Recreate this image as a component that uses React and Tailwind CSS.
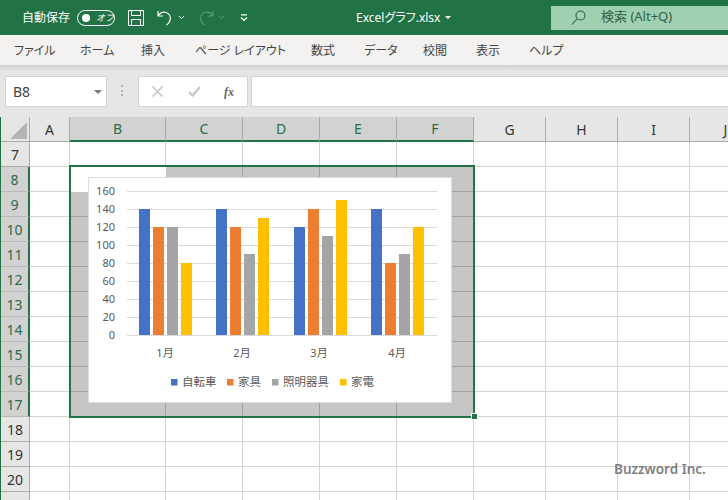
import React from "react";

const font = { fontFamily: '"Noto Sans", "Noto Sans CJK JP", sans-serif' };

const menus = [
  { name: "ファイル", w: "w-[66px]" },
  { name: "ホーム", w: "w-[61px]" },
  { name: "挿入", w: "w-[54px]" },
  { name: "ページ レイアウト", w: "w-[116px]" },
  { name: "数式", w: "w-[53px]" },
  { name: "データ", w: "w-[59px]" },
  { name: "校閲", w: "w-[53px]" },
  { name: "表示", w: "w-[53px]" },
  { name: "ヘルプ", w: "w-[60px]" },
];

const columns = [
  { name: "A", w: "w-[40px]" },
  { name: "B", w: "w-[96px]", on: true },
  { name: "C", w: "w-[77px]", on: true },
  { name: "D", w: "w-[77px]", on: true },
  { name: "E", w: "w-[77px]", on: true },
  { name: "F", w: "w-[77px]", on: true },
  { name: "G", w: "w-[72px]" },
  { name: "H", w: "w-[72px]" },
  { name: "I", w: "w-[72px]" },
  { name: "J", w: "w-[72px]" },
];

const rows = [7, 8, 9, 10, 11, 12, 13, 14, 15, 16, 17, 18, 19, 20, 21];

const colors = ["#4472c4", "#ed7d31", "#a5a5a5", "#ffc000"];

const groups = [
  { label: "1月", center: 165, x: [139, 153, 167, 181], v: [140, 120, 120, 80] },
  { label: "2月", center: 242, x: [216, 230, 244, 258], v: [140, 120, 90, 130] },
  { label: "3月", center: 319, x: [294, 308, 322, 336], v: [120, 140, 110, 150] },
  { label: "4月", center: 397, x: [371, 385, 399, 413], v: [140, 80, 90, 120] },
];

const legend = [
  { name: "自転車", x: 171 },
  { name: "家具", x: 227 },
  { name: "照明器具", x: 272 },
  { name: "家電", x: 340 },
];

function Chart() {
  return (
    <svg width="364" height="226" viewBox="88 177 364 226" className="block">
      {[0, 20, 40, 60, 80, 100, 120, 140, 160].map((t) => {
        const y = 335 - t * 0.9;
        return (
          <g key={t}>
            <line x1="127" x2="437" y1={y + 0.5} y2={y + 0.5} stroke="#d9d9d9" />
            <text x="115" y={y + 4} textAnchor="end" fontSize="11" fill="#595959">{t}</text>
          </g>
        );
      })}
      {groups.map((g) => (
        <g key={g.label}>
          {g.v.map((v, i) => (
            <rect key={i} x={g.x[i]} y={335 - v * 0.9} width="11" height={v * 0.9} fill={colors[i]} />
          ))}
          <text x={g.center} y="357" textAnchor="middle" fontSize="11" fill="#595959">{g.label}</text>
        </g>
      ))}
      {legend.map((l, i) => (
        <g key={l.name}>
          <rect x={l.x} y="379" width="6.5" height="6.5" fill={colors[i]} />
          <text x={l.x + 11} y="386" fontSize="11.5" fill="#595959">{l.name}</text>
        </g>
      ))}
    </svg>
  );
}

function TitleBar() {
  return (
    <div className="flex h-[35px] shrink-0 items-center bg-[#217346] text-white">
      <span className="ml-[22px] w-[55px] whitespace-nowrap text-[12px] [font-feature-settings:'palt']">自動保存</span>
      <div className="flex h-[16px] w-[38px] items-center rounded-full border border-white pl-[4px]">
        <div className="h-[8px] w-[8px] rounded-full bg-white" />
        <span className="ml-[6px] text-[9px] italic leading-none">オフ</span>
      </div>
      <svg className="ml-[13px]" width="16" height="16" viewBox="0 0 16 16" fill="none" stroke="#fff" strokeWidth="1">
        <path d="M.5.5h15v15H.5z" />
        <path d="M3.500.5v5h9v-5M3.500 15.500v-6h9v6" />
      </svg>
      <svg className="ml-[13px]" width="16" height="16" viewBox="0 0 16 16" fill="none" stroke="#fff" strokeWidth="1.2">
        <path d="M1 1v5h5M1 6c2-3 5-4.500 8-3.500 3.500 1.200 5 4.500 4 8-.5 1.700-2 3.500-3.500 4.500" />
      </svg>
      <svg className="ml-[5px]" width="7" height="5" viewBox="0 0 7 5" fill="none" stroke="#fff" strokeWidth="1">
        <path d="M1 1l2.500 2.500L6 1" />
      </svg>
      <svg className="ml-[13px]" width="16" height="16" viewBox="0 0 16 16" fill="none" stroke="#5b9a78" strokeWidth="1.2">
        <path d="M15 1v5h-5M15 6c-2-3-5-4.500-8-3.500-3.500 1.200-5 4.500-4 8 .5 1.700 2 3.500 3.500 4.500" />
      </svg>
      <svg className="ml-[4px]" width="7" height="5" viewBox="0 0 7 5" fill="none" stroke="#5b9a78" strokeWidth="1">
        <path d="M1 1l2.500 2.500L6 1" />
      </svg>
      <svg className="ml-[15px]" width="8" height="8" viewBox="0 0 8 8" fill="none" stroke="#fff" strokeWidth="1.200">
        <path d="M1 .8h6M1 3.500l3 3 3-3" />
      </svg>
      <span className="ml-[108px] w-[89px] whitespace-nowrap text-[12px] [font-feature-settings:'palt']">Excelグラフ.xlsx</span>
      <svg width="6" height="3" viewBox="0 0 6 3" fill="#fff">
        <path d="M0 0h6L3 3z" />
      </svg>
      <div className="ml-[100px] flex h-[24px] flex-1 items-center bg-[#9fd0b1] pb-[1px] text-[13px] text-[#2f5f44]">
        <svg className="ml-[20px]" width="15" height="15" viewBox="0 0 15 15" fill="none" stroke="#2f5f44" strokeWidth="1.1">
          <circle cx="9.500" cy="5.500" r="4.500" />
          <path d="M6 9l-5 5.500" />
        </svg>
        <span className="ml-[15px] whitespace-nowrap">検索 (Alt+Q)</span>
      </div>
    </div>
  );
}

function MenuBar() {
  return (
    <div className="flex h-[30px] shrink-0 items-center bg-[#f3f2f1] pt-[1px] text-[12px] text-[#444444] [font-feature-settings:'palt']">
      {menus.map((m) => (
        <span key={m.name} className={`whitespace-nowrap pl-[14px] ${m.w}`}>{m.name}</span>
      ))}
    </div>
  );
}

function FormulaBar() {
  return (
    <div className="flex h-[52px] shrink-0 items-start bg-[linear-gradient(#d0d0d0,#e6e6e6_6px)] pt-[11px]">
      <div className="ml-[5px] flex h-[31px] w-[102px] items-center justify-between border border-[#d4d4d4] bg-white pl-[7px] pr-[4px] text-[14px] text-[#444444]">
        <span>B8</span>
        <svg width="8" height="4" viewBox="0 0 8 4" fill="#777777">
          <path d="M0 0h8L4 4z" />
        </svg>
      </div>
      <div className="ml-[14px] mt-[9px] flex h-[11px] w-[3px] flex-col justify-between">
        <div className="h-[2px] w-[2px] bg-[#b0b0b0]" />
        <div className="h-[2px] w-[2px] bg-[#b0b0b0]" />
        <div className="h-[2px] w-[2px] bg-[#b0b0b0]" />
      </div>
      <div className="ml-[14px] flex h-[31px] w-[110px] items-center border border-[#d4d4d4] bg-white">
        <svg className="ml-[13px]" width="11" height="11" viewBox="0 0 11 11" fill="none" stroke="#c4c4c4" strokeWidth="1.500">
          <path d="M.5.5l10 10M10.500.5l-10 10" />
        </svg>
        <svg className="ml-[25px]" width="13" height="11" viewBox="0 0 13 11" fill="none" stroke="#c4c4c4" strokeWidth="2">
          <path d="M1 6l3.500 3.500L12 1" />
        </svg>
        <span className="ml-[23px] font-['Liberation_Serif'] text-[12px] font-bold italic text-[#666666]">fx</span>
      </div>
      <div className="ml-[3px] h-[31px] flex-1 border-y border-l border-[#d4d4d4] bg-white" />
    </div>
  );
}

function Sheet() {
  return (
    <div className="relative flex-1 overflow-hidden border-l border-[#217346] bg-white text-[14px]">
      <div className="flex h-[25px]">
        <div className="flex h-[25px] w-[29px] shrink-0 items-end justify-end border-b border-r border-[#ababab] bg-[#e6e6e6] p-[2px]">
          <svg width="17" height="17" viewBox="0 0 17 17" fill="#b4b4b4">
            <path d="M17 0v17H0z" />
          </svg>
        </div>
        {columns.map((c) => (
          <div
            key={c.name}
            className={
              c.on
                ? `flex shrink-0 items-center justify-center border-b-2 border-r border-b-[#217346] border-r-[#ababab] bg-[#d2d2d2] text-[#2c6b4a] ${c.w}`
                : `flex shrink-0 items-center justify-center border-b border-r border-[#ababab] bg-[#e6e6e6] text-[#333333] ${c.w}`
            }
          >
            {c.name}
          </div>
        ))}
      </div>
      {rows.map((r) => {
        const on = r >= 8 && r <= 17;
        return (
          <div key={r} className="flex h-[25px]">
            <div
              className={
                on
                  ? "flex w-[29px] shrink-0 items-center justify-center border-b border-r-2 border-b-[#b8b8b8] border-r-[#217346] bg-[#d2d2d2] text-[#2c6b4a]"
                  : "flex w-[29px] shrink-0 items-center justify-center border-b border-r border-[#ababab] bg-[#e6e6e6] text-[#333333]"
              }
            >
              {r}
            </div>
            {columns.map((c) => {
              const first = r === 8 && c.name === "B";
              let cell = "border-b border-r border-[#d4d4d4] bg-white";
              if (on && c.on && !first) cell = "border-b border-r border-[#a0a0a0] bg-[#c6c6c6]";
              if (first) cell = "bg-white";
              return <div key={c.name} className={`shrink-0 ${c.w} ${cell}`} />;
            })}
          </div>
        );
      })}

      {/* selection box */}
      <div className="absolute left-[68px] top-[48px] h-[253px] w-[406px] border-2 border-[#217346]" />
      <div className="absolute left-[470px] top-[296px] h-[7px] w-[7px] border border-white bg-[#217346]" />

      {/* chart sits over the cells */}
      <div className="absolute left-[87px] top-[60px] h-[226px] w-[364px] bg-white shadow-[inset_0_0_0_1px_#dcdcdc]">
        <Chart />
      </div>

      <span className="absolute left-[613px] top-[342px] whitespace-nowrap text-[13.5px] font-semibold text-[#808080]">Buzzword Inc.</span>
    </div>
  );
}

export default function App() {
  return (
    <div className="flex h-[500px] w-[728px] flex-col overflow-hidden" style={font}>
      <TitleBar />
      <MenuBar />
      <FormulaBar />
      <Sheet />
    </div>
  );
}
